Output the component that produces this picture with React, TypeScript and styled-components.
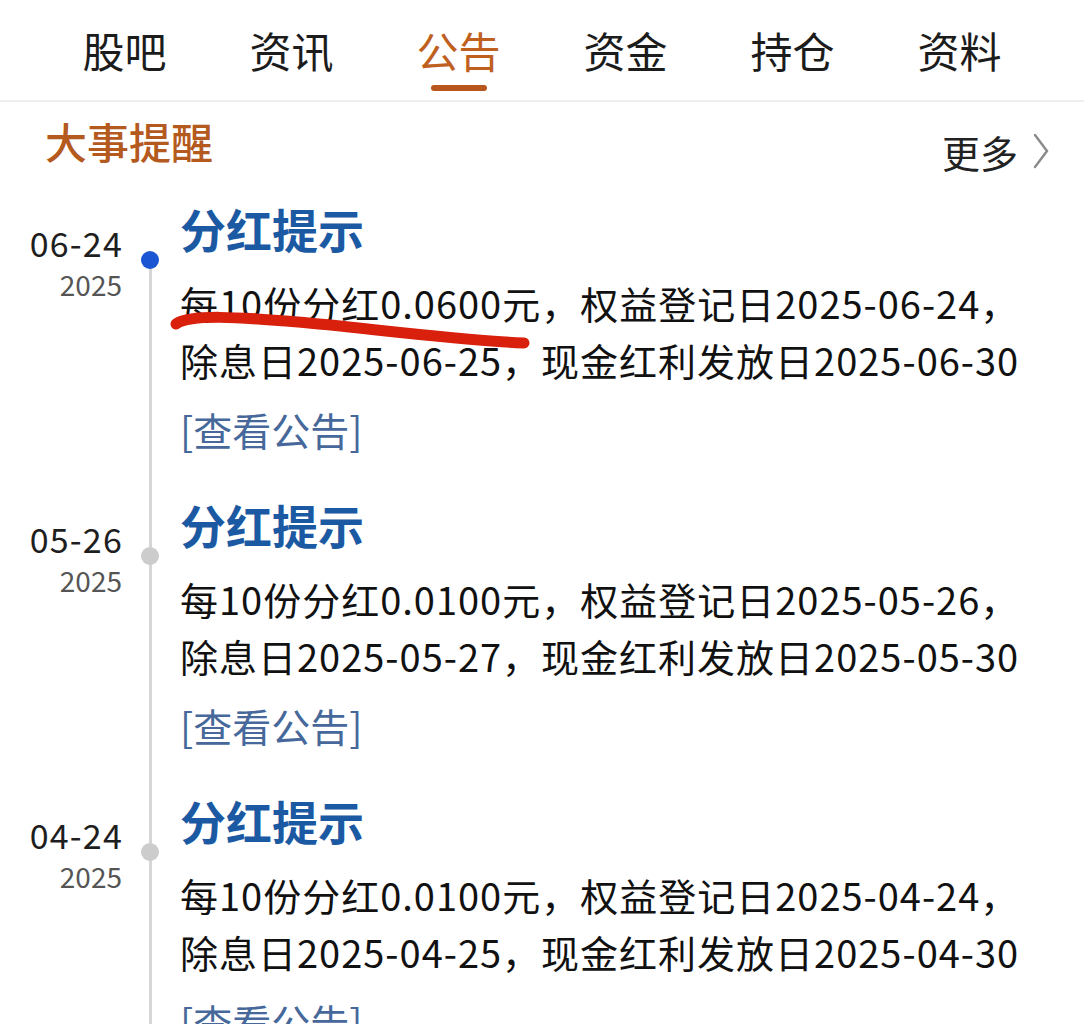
import React from 'react';
import styled, { createGlobalStyle } from 'styled-components';

const GlobalStyle = createGlobalStyle`
  html, body {
    margin: 0;
    padding: 0;
    background: #ffffff;
  }
  body {
    font-family: "Noto Sans CJK SC", "Noto Sans", sans-serif;
    color: #1a1a1a;
  }
`;

const Page = styled.div`
  width: 1084px;
  height: 1024px;
  overflow: hidden;
  background: #fff;
`;

const TabBar = styled.nav`
  display: flex;
  justify-content: center;
  height: 100px;
  border-bottom: 2px solid #eeeeee;
`;

const Tab = styled.div<{ $active?: boolean }>`
  position: relative;
  width: 167px;
  display: flex;
  align-items: center;
  justify-content: center;
  padding-bottom: 2px;
  font-size: 42px;
  color: ${(p) => (p.$active ? '#c0601f' : '#1c1c1c')};

  &::after {
    content: '';
    display: ${(p) => (p.$active ? 'block' : 'none')};
    position: absolute;
    left: 50%;
    bottom: 9px;
    width: 56px;
    height: 6px;
    margin-left: -28px;
    border-radius: 3px;
    background: #b8561d;
  }
`;

const SectionHead = styled.div`
  display: flex;
  align-items: center;
  justify-content: space-between;
  height: 98px;
  padding: 0 34px 0 45px;
`;

const SectionTitle = styled.h2`
  margin: 0 0 22px;
  font-size: 42px;
  font-weight: 500;
  color: #b45a1e;
`;

const More = styled.div`
  display: flex;
  align-items: center;
  gap: 14px;
  font-size: 38px;
  color: #222;
`;

const Timeline = styled.div`
  display: flex;
  flex-direction: column;
`;

const Item = styled.div`
  display: grid;
  grid-template-columns: 122px 58px 1fr;
  height: 296px;
`;

const DateCol = styled.div`
  display: flex;
  flex-direction: column;
  align-items: flex-end;
  padding-top: 22px;
`;

const Day = styled.div`
  font-size: 34px;
  line-height: 42px;
  letter-spacing: 1.2px;
  margin-right: -1px;
  color: #1e1e1e;
`;

const Year = styled.div`
  font-size: 28px;
  line-height: 40px;
  color: #555;
`;

const Axis = styled.div<{ $first?: boolean; $active?: boolean }>`
  position: relative;

  &::before {
    content: '';
    position: absolute;
    left: 27px;
    top: ${(p) => (p.$first ? '60px' : '0')};
    bottom: 0;
    width: 3px;
    background: #d6d6d6;
  }

  &::after {
    content: '';
    position: absolute;
    left: 19px;
    top: 51px;
    width: 18px;
    height: 18px;
    border-radius: 50%;
    background: ${(p) => (p.$active ? '#1a55d4' : '#cccccc')};
  }
`;

const Content = styled.div`
  position: relative;
`;

const Title = styled.div`
  font-size: 46px;
  line-height: 56px;
  font-weight: 700;
  color: #1b5aa3;
`;

const Body = styled.div`
  margin-top: 18px;
  font-size: 38px;
  line-height: 57px;
  letter-spacing: 1px;
  color: #111;
  white-space: nowrap;
`;

const Link = styled.div`
  margin-top: 13px;
  font-size: 39px;
  line-height: 57px;
  color: #46689a;
`;

const PenMark = styled.svg`
  position: absolute;
  left: -12px;
  top: 108px;
  width: 370px;
  height: 50px;
  overflow: visible;
  pointer-events: none;
`;

const Chevron = () => (
  <svg width="18" height="38" viewBox="0 0 18 38">
    <path d="M3 3 L15 19 L3 35" fill="none" stroke="#8a8a8a" strokeWidth="2.4" strokeLinecap="round" />
  </svg>
);

const tabs = ['股吧', '资讯', '公告', '资金', '持仓', '资料'];

const events = [
  {
    day: '06-24',
    year: '2025',
    line1: '每10份分红0.0600元，权益登记日2025-06-24，',
    line2: '除息日2025-06-25，现金红利发放日2025-06-30',
  },
  {
    day: '05-26',
    year: '2025',
    line1: '每10份分红0.0100元，权益登记日2025-05-26，',
    line2: '除息日2025-05-27，现金红利发放日2025-05-30',
  },
  {
    day: '04-24',
    year: '2025',
    line1: '每10份分红0.0100元，权益登记日2025-04-24，',
    line2: '除息日2025-04-25，现金红利发放日2025-04-30',
  },
];

export default function App() {
  return (
    <Page>
      <GlobalStyle />
      <TabBar>
        {tabs.map((t) => (
          <Tab key={t} $active={t === '公告'}>
            {t}
          </Tab>
        ))}
      </TabBar>
      <SectionHead>
        <SectionTitle>大事提醒</SectionTitle>
        <More>
          更多
          <Chevron />
        </More>
      </SectionHead>
      <Timeline>
        {events.map((e, i) => (
          <Item key={e.day}>
            <DateCol>
              <Day>{e.day}</Day>
              <Year>{e.year}</Year>
            </DateCol>
            <Axis $first={i === 0} $active={i === 0} />
            <Content>
              <Title>分红提示</Title>
              <Body>
                {e.line1}
                <br />
                {e.line2}
              </Body>
              <Link>[查看公告]</Link>
              {i === 0 && (
                <PenMark viewBox="0 0 370 50">
                  <path
                    d="M8 16 C 22 6, 70 9, 130 14 S 285 32, 356 35"
                    fill="none"
                    stroke="#d8200c"
                    strokeWidth="11"
                    strokeLinecap="round"
                  />
                </PenMark>
              )}
            </Content>
          </Item>
        ))}
      </Timeline>
    </Page>
  );
}
